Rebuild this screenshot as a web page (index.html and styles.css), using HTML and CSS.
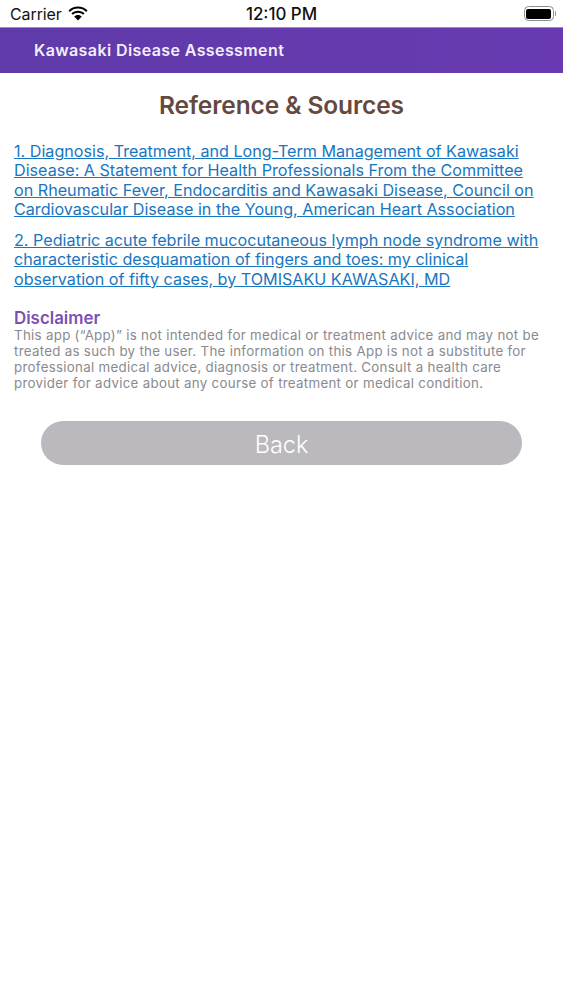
FILE: index.html
```html
<!DOCTYPE html>
<html lang="en">
<head>
<meta charset="utf-8">
<title>Reference &amp; Sources</title>
<link rel="stylesheet" href="styles.css">
</head>
<body>
<div class="status">
  <div class="status-left">
    <span class="carrier">Carrier</span>
    <svg class="wifi" width="20" height="15" viewBox="0 0 20 15"><path d="M10 2.600c3.200 0 6 1.200 8.200 3.300l1.300-1.500C17 2 13.700.6 10 .6S3 2 .5 4.400l1.300 1.500C4 3.800 6.800 2.600 10 2.600z M10 6.800c2 0 3.800.8 5.200 2l1.400-1.500C14.800 5.700 12.500 4.700 10 4.700s-4.800 1-6.600 2.600l1.400 1.500c1.400-1.200 3.200-2 5.200-2z M10 9c-1.500 0-2.800.6-3.800 1.500L10 14.600l3.800-4.100C12.800 9.600 11.500 9 10 9z"/></svg>
  </div>
  <span class="time">12:10 PM</span>
  <div class="battery"><span class="battery-body"><span class="battery-fill"></span></span><span class="battery-cap"></span></div>
</div>
<header class="nav">Kawasaki Disease Assessment</header>
<main class="content">
  <h1 class="title">Reference &amp; Sources</h1>
  <a class="ref" href="#">1. Diagnosis, Treatment, and Long-Term Management of Kawasaki Disease: A Statement for Health Professionals From the Committee on Rheumatic Fever, Endocarditis and Kawasaki Disease, Council on Cardiovascular Disease in the Young, American Heart Association</a>
  <a class="ref" href="#">2. Pediatric acute febrile mucocutaneous lymph node syndrome with characteristic desquamation of fingers and toes: my clinical observation of fifty cases, by TOMISAKU KAWASAKI, MD</a>
  <h2 class="disc-title">Disclaimer</h2>
  <p class="disc-text">This app (“App)” is not intended for medical or treatment advice and may not be treated as such by the user. The information on this App is not a substitute for professional medical advice, diagnosis or treatment. Consult a health care provider for advice about any course of treatment or medical condition.</p>
  <button class="back">Back</button>
</main>
</body>
</html>
```
FILE: styles.css
```css
* { box-sizing: border-box; }
html, body { margin: 0; padding: 0; background: #fff; }
body { font-family: Inter, "Liberation Sans", sans-serif; width: 563px; height: 1000px; overflow: hidden; }
.status { height: 27px; display: flex; align-items: center; justify-content: space-between; padding: 0 7px 0 10px; position: relative; color: #111; }
.status-left { display: flex; align-items: center; gap: 6px; }
.carrier { font-size: 16px; letter-spacing: -0.1px; }
.wifi { fill: #000; }
.time { position: absolute; left: 0; right: 0; top: 5px; text-align: center; font-size: 16.9px; font-weight: 500; line-height: 19px; }
.battery { display: flex; align-items: center; gap: 1px; }
.battery-body { width: 30px; height: 15px; border: 1px solid #8e8e92; border-radius: 4.5px; padding: 1.5px; display: block; }
.battery-fill { display: block; height: 100%; background: #000; border-radius: 2px; }
.battery-cap { width: 1.5px; height: 5px; background: #999; border-radius: 1px; }
.nav { height: 46px; border-top: 1px solid #9d8bc4; background: linear-gradient(90deg, #5f3aa9, #693ab2); color: #f3edfb; font-size: 16px; font-weight: 600; line-height: 45px; padding-left: 34px; letter-spacing: 0.4px; }
.content { padding: 0 14px; display: flex; flex-direction: column; }
.title { margin: 17px 0 0; height: 30px; text-align: center; font-size: 24.5px; line-height: 30px; font-weight: 600; color: #65493f; letter-spacing: -0.1px; }
.ref { display: block; color: #1976c0; font-size: 16.15px; line-height: 19.4px; text-decoration: underline; padding-right: 8px; }
.title + .ref { margin-top: 22px; }
.ref + .ref { margin-top: 11.4px; }
.disc-title { margin: 18.3px 0 0; font-size: 16.9px; line-height: 20px; font-weight: 600; color: #7a52b3; }
.disc-text { margin: -1px 0 0; font-size: 13.3px; line-height: 16px; color: #8a8a8e; letter-spacing: 0.3px; }
.back { align-self: center; width: 481px; height: 44px; margin-top: 30px; padding: 3px 0 0; border: 0; border-radius: 22px; background: #bbb9bd; color: #fff; font-family: inherit; font-size: 23.5px; font-weight: 300; }
```
